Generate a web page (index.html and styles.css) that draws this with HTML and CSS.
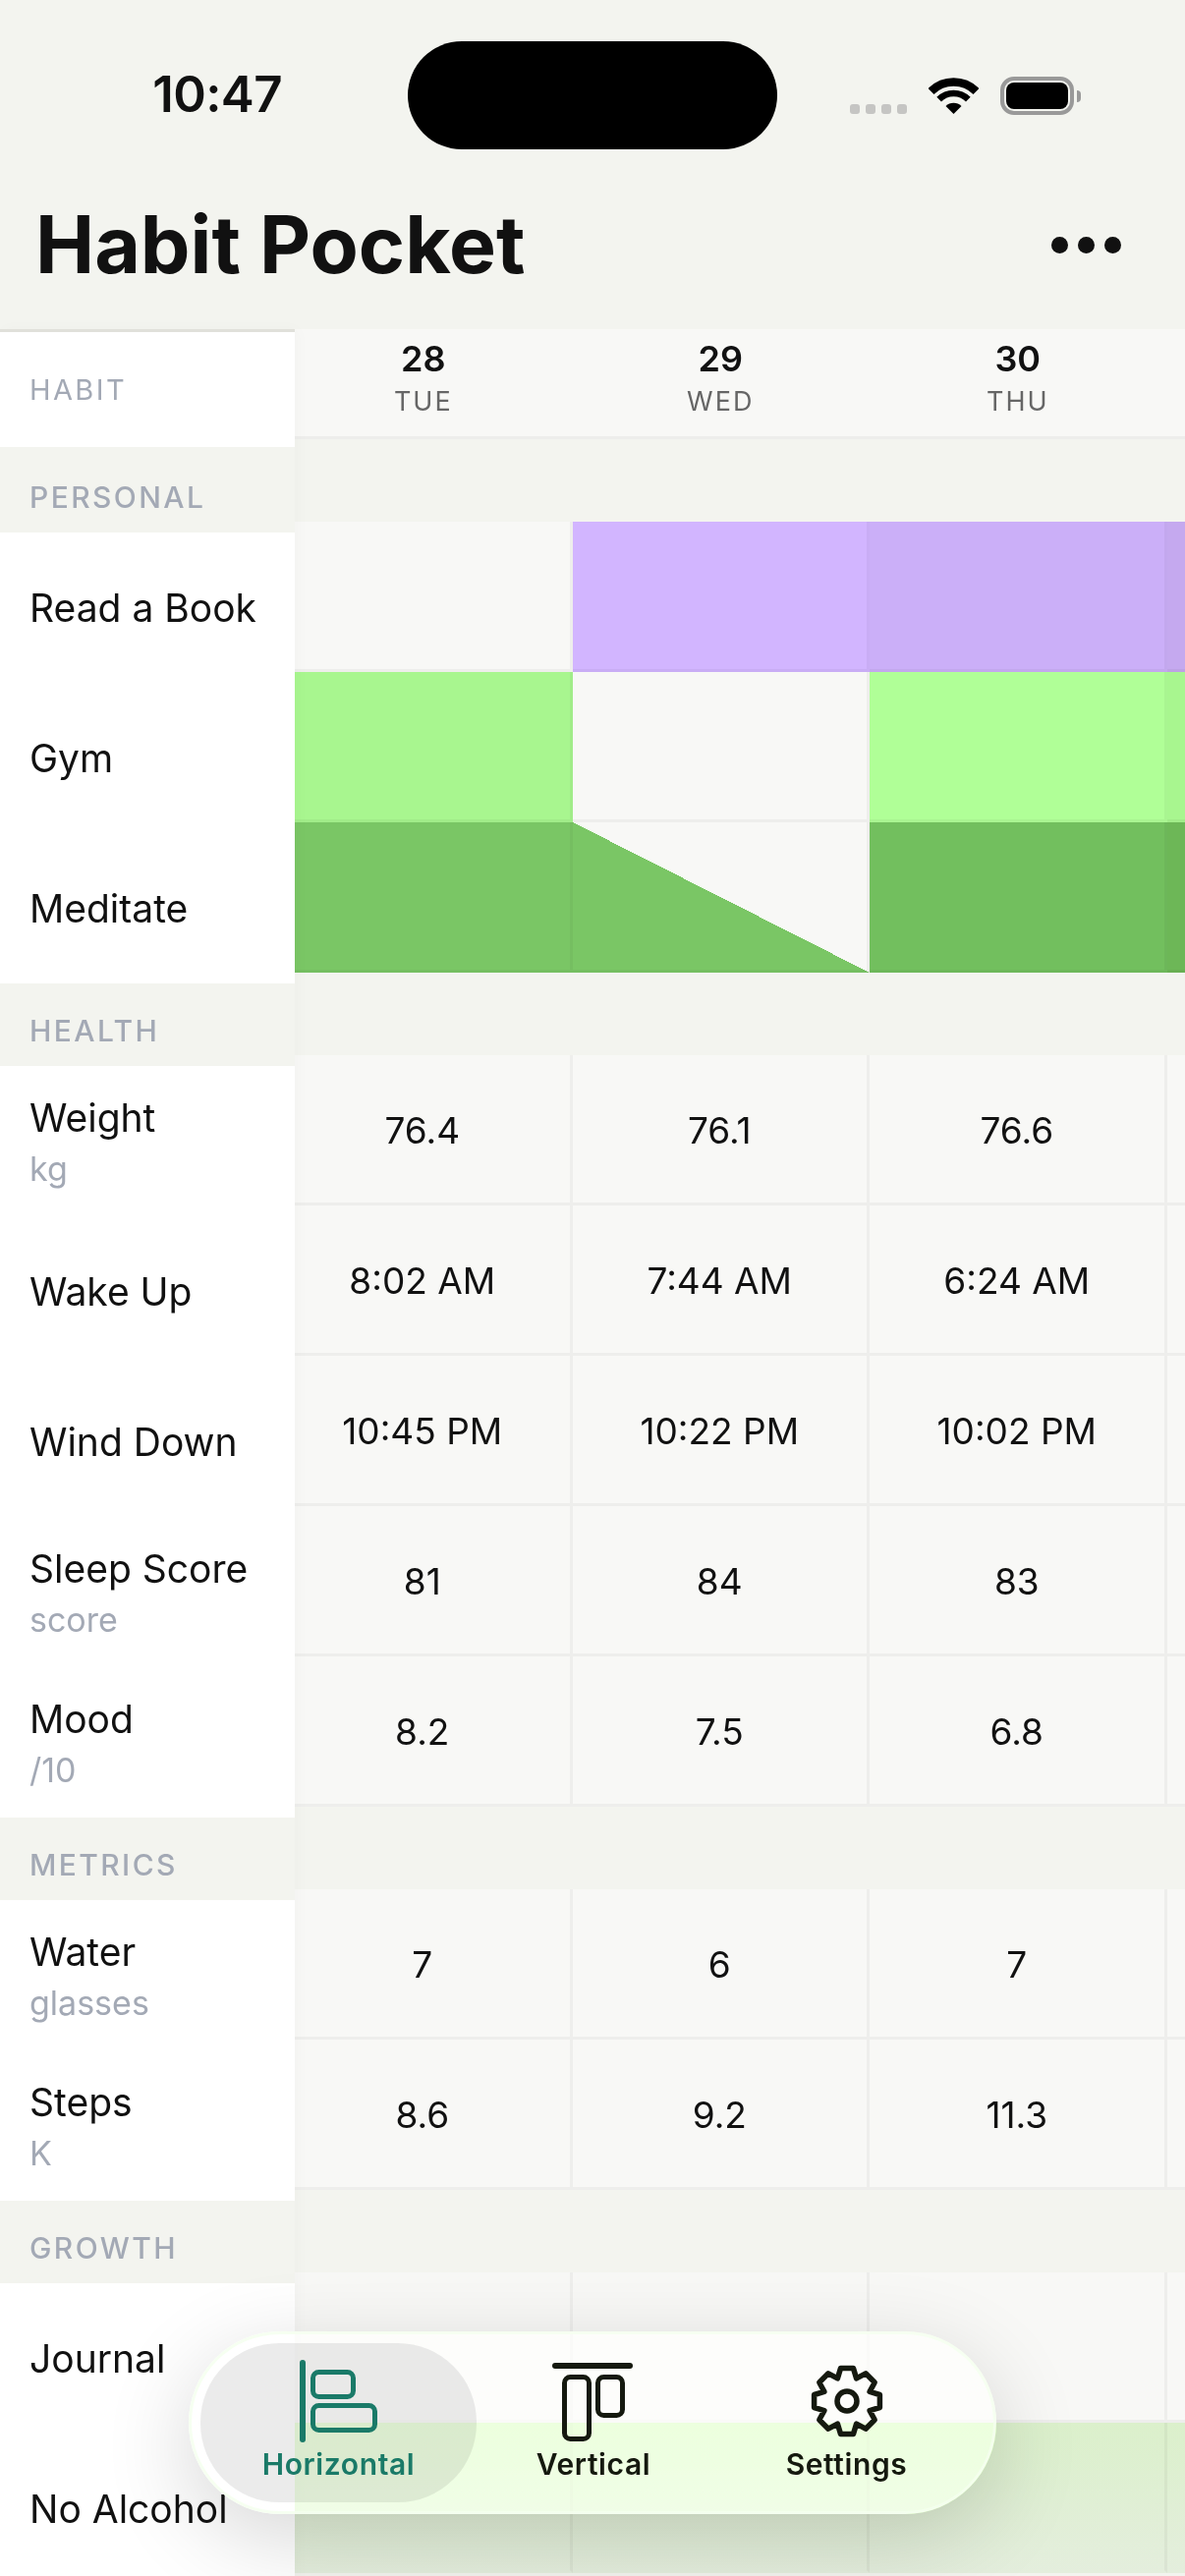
FILE: index.html
```html
<!DOCTYPE html>
<html>

<head>
    <title>Habit Pocket</title>
    <link rel="stylesheet" href="styles.css">
</head>

<body>
    <div class="status-bar">
        <span class="time">10:47</span>
        <div class="island"></div>
        <div class="status-icons">
            <div class="signal"><i></i><i></i><i></i><i></i></div>
            <svg class="wifi" width="51" height="38" viewBox="0 0 51 38">
                <path d="M2.5 14A32.5 32.5 0 0 1 48.5 14" fill="none" stroke="#000" stroke-width="8.4" />
                <path d="M10.65 22.15A21 21 0 0 1 40.35 22.15" fill="none" stroke="#000" stroke-width="6.6" />
                <path d="M25.5 37L17.5 29A11.3 11.3 0 0 1 33.5 29Z" fill="#000" />
            </svg>
            <div class="battery"><div class="battery-level"></div></div>
            <div class="battery-tip"></div>
        </div>
    </div>

    <header class="top-bar">
        <h1>Habit Pocket</h1>
        <div class="more"><i></i><i></i><i></i></div>
    </header>

    <main class="board">
        <!-- fixed column on the left -->
        <div class="names">
            <div class="names-head">HABIT</div>

            <div class="group-name">PERSONAL</div>
            <div class="name">Read a Book</div>
            <div class="name">Gym</div>
            <div class="name">Meditate</div>

            <div class="group-name">HEALTH</div>
            <div class="name">Weight<small>kg</small></div>
            <div class="name">Wake Up</div>
            <div class="name">Wind Down</div>
            <div class="name">Sleep Score<small>score</small></div>
            <div class="name">Mood<small>/10</small></div>

            <div class="group-name">METRICS</div>
            <div class="name">Water<small>glasses</small></div>
            <div class="name">Steps<small>K</small></div>

            <div class="group-name">GROWTH</div>
            <div class="name">Journal</div>
            <div class="name">No Alcohol</div>
        </div>

        <div class="days">
            <div class="track">
                <div class="day-row">
                    <div class="day"><b>28</b><span>TUE</span></div>
                    <div class="day"><b>29</b><span>WED</span></div>
                    <div class="day"><b>30</b><span>THU</span></div>
                    <div class="day"></div>
                </div>

                <div class="group-gap"></div>
                <div class="row">
                    <div class="cell"></div>
                    <div class="cell purple-1"></div>
                    <div class="cell purple-2"></div>
                    <div class="cell purple-3"></div>
                </div>
                <div class="row">
                    <div class="cell lime-1"></div>
                    <div class="cell"></div>
                    <div class="cell lime-2"></div>
                    <div class="cell lime-1"></div>
                </div>
                <div class="row">
                    <div class="cell green-1"></div>
                    <div class="cell green-half"></div>
                    <div class="cell green-2"></div>
                    <div class="cell green-3"></div>
                </div>

                <div class="group-gap"></div>
                <div class="row">
                    <div class="cell">76.4</div>
                    <div class="cell">76.1</div>
                    <div class="cell">76.6</div>
                    <div class="cell"></div>
                </div>
                <div class="row">
                    <div class="cell">8:02 AM</div>
                    <div class="cell">7:44 AM</div>
                    <div class="cell">6:24 AM</div>
                    <div class="cell"></div>
                </div>
                <div class="row">
                    <div class="cell">10:45 PM</div>
                    <div class="cell">10:22 PM</div>
                    <div class="cell">10:02 PM</div>
                    <div class="cell"></div>
                </div>
                <div class="row">
                    <div class="cell">81</div>
                    <div class="cell">84</div>
                    <div class="cell">83</div>
                    <div class="cell"></div>
                </div>
                <div class="row">
                    <div class="cell">8.2</div>
                    <div class="cell">7.5</div>
                    <div class="cell">6.8</div>
                    <div class="cell"></div>
                </div>

                <div class="group-gap"></div>
                <div class="row">
                    <div class="cell">7</div>
                    <div class="cell">6</div>
                    <div class="cell">7</div>
                    <div class="cell"></div>
                </div>
                <div class="row">
                    <div class="cell">8.6</div>
                    <div class="cell">9.2</div>
                    <div class="cell">11.3</div>
                    <div class="cell"></div>
                </div>

                <div class="group-gap"></div>
                <div class="row">
                    <div class="cell"></div>
                    <div class="cell"></div>
                    <div class="cell"></div>
                    <div class="cell"></div>
                </div>
                <div class="row">
                    <div class="cell pale"></div>
                    <div class="cell pale"></div>
                    <div class="cell pale"></div>
                    <div class="cell pale"></div>
                </div>
            </div>
        </div>
    </main>

    <nav class="tabs">
        <div class="tab active">
            <svg width="84" height="84" viewBox="0 0 84 84" fill="none" stroke="#1a7a68" stroke-width="5" stroke-linecap="round">
                <path d="M5 3V81" stroke-width="6" />
                <rect x="15.5" y="12.5" width="41" height="25" rx="6" />
                <rect x="15.5" y="46.5" width="63" height="25" rx="6" />
            </svg>
            <span>Horizontal</span>
        </div>
        <div class="tab">
            <svg width="84" height="84" viewBox="0 0 84 84" fill="none" stroke="#15190f" stroke-width="5" stroke-linecap="round">
                <path d="M3 6H79" stroke-width="6" />
                <rect x="12.5" y="17.5" width="25" height="63" rx="6" />
                <rect x="46.5" y="17.5" width="25" height="39" rx="6" />
            </svg>
            <span>Vertical</span>
        </div>
        <div class="tab">
            <svg width="84" height="84" viewBox="-42 -42 84 84" fill="none" stroke="#15190f" stroke-width="5.5" stroke-linejoin="round">
                <path d="M-9.6-23.1L-6.5-33.4L6.5-33.4L9.6-23.1L19-28.2L28.2-19L23.1-9.6L33.4-6.5L33.4 6.5L23.1 9.6L28.2 19L19 28.2L9.6 23.1L6.5 33.4L-6.5 33.4L-9.6 23.1L-19 28.2L-28.2 19L-23.1 9.6L-33.4 6.5L-33.4-6.5L-23.1-9.6L-28.2-19L-19-28.2Z" />
                <circle r="10" />
            </svg>
            <span>Settings</span>
        </div>
    </nav>
</body>

</html>
```

FILE: styles.css
```css
* {
    box-sizing: border-box;
}

html,
body {
    margin: 0px;
    height: 2622px;
    overflow: hidden;
}

body {
    position: relative;
    background-color: #f3f4ef;
    color: #111111;
    font-family: Inter, "Liberation Sans", sans-serif;
}

/* status bar */
.status-bar {
    height: 152px;
    padding-top: 42px;
    display: flex;
    align-items: flex-start;
}

.time {
    width: 415px;
    padding-top: 24px;
    padding-right: 128px;
    text-align: right;
    font-size: 51px;
    line-height: 60px;
    font-weight: 600;
    letter-spacing: -0.6px;
}

.island {
    width: 376px;
    height: 110px;
    border-radius: 55px;
    background-color: #000000;
}

.status-icons {
    display: flex;
    align-items: flex-end;
    margin-left: 74px;
    height: 75px;
}

.signal {
    display: flex;
    gap: 6px;
    margin-right: 22px;
    margin-bottom: 1px;
}

.signal i {
    width: 10px;
    height: 10px;
    border-radius: 3px;
    background-color: #c5c5c3;
}

.wifi {
    display: block;
    margin-right: 22px;
}

.battery {
    width: 75px;
    height: 39px;
    border: 4px solid #999999;
    border-radius: 14px;
    padding: 2px;
}

.battery-level {
    height: 100%;
    border-radius: 8px;
    background-color: #000000;
}

.battery-tip {
    width: 4px;
    height: 12px;
    margin-left: 3px;
    margin-bottom: 13px;
    border-radius: 0px 4px 4px 0px;
    background-color: #999999;
}

/* title */
.top-bar {
    height: 183px;
    padding: 9px 65px 0px 36px;
    display: flex;
    align-items: center;
    justify-content: space-between;
}

h1 {
    margin: 0px;
    font-size: 80.5px;
    font-weight: 700;
}

.more {
    display: flex;
    gap: 10px;
    padding-top: 3px;
}

.more i {
    width: 17px;
    height: 17px;
    border-radius: 50%;
    background-color: #111111;
}

/* board */
.board {
    display: flex;
    align-items: flex-start;
}

.names {
    position: relative;
    z-index: 1;
    flex: 0 0 300px;
    background-color: #ffffff;
    box-shadow: 3px 0px 14px rgba(0, 0, 0, 0.025);
}

.names-head {
    height: 120px;
    padding-left: 30px;
    display: flex;
    align-items: center;
    border-top: 3px solid #e0e0da;
    color: #a3a9b5;
    font-size: 29px;
    letter-spacing: 2.4px;
}

.group-name {
    height: 84px;
    padding: 0px 0px 18px 30px;
    display: flex;
    align-items: flex-end;
    background-color: #f3f4ef;
    color: #a3a9b5;
    font-size: 30px;
    font-weight: 500;
    letter-spacing: 2.4px;
}

.names-head + .group-name {
    height: 87px;
}

.name {
    height: 153px;
    padding-left: 30px;
    display: flex;
    flex-direction: column;
    justify-content: center;
    font-size: 39px;
    line-height: 48px;
}

.name small {
    margin-top: 8px;
    color: #a3a9b5;
    font-size: 34px;
    line-height: 40px;
}

.days {
    flex: 1;
    overflow: hidden;
}

.track {
    width: 1210px;
    margin-left: -20px;
}

.day-row,
.row {
    display: grid;
    grid-template-columns: repeat(4, 302.5px);
}

.day-row {
    height: 112px;
    background-color: #f8f8f6;
    border-bottom: 3px solid #ededeb;
}

.day {
    padding-right: 1px;
    padding-top: 8px;
    text-align: center;
}

.day b {
    display: block;
    font-size: 36px;
    line-height: 44px;
    font-weight: 600;
}

.day span {
    display: block;
    margin-top: 6px;
    color: #666666;
    font-size: 27px;
    line-height: 32px;
    letter-spacing: 2px;
}

.group-gap {
    height: 84px;
}

.cell {
    height: 153px;
    padding-top: 2px;
    display: flex;
    align-items: center;
    justify-content: center;
    background-color: #f8f8f6;
    background-origin: border-box;
    border-right: 3px solid rgba(0, 0, 0, 0.04);
    border-bottom: 3px solid rgba(0, 0, 0, 0.04);
    font-size: 37px;
}

.purple-1 {
    background-color: #d2b5ff;
}

.purple-2 {
    background-color: #cbaff8;
}

.purple-3 {
    background-color: #c5a9ef;
}

.lime-1 {
    background-color: #a8f68f;
}

.lime-2 {
    background-color: #b0ff97;
}

.green-1 {
    background-color: #7ac665;
}

.green-2 {
    background-color: #72bf5e;
}

.green-3 {
    background-color: #6db757;
}

.green-half {
    background-image: linear-gradient(to top right, #7ac665 50%, #f8f8f6 50%);
}

.pale {
    background-image: linear-gradient(#dbf0cb, #e4eedd);
    border-bottom-color: transparent;
}

/* floating tab bar */
.tabs {
    position: absolute;
    z-index: 2;
    left: 192px;
    top: 2373px;
    width: 822px;
    height: 186px;
    padding: 9px;
    display: grid;
    grid-template-columns: 281px 238px 277px;
    border: 3px solid rgba(244, 255, 238, 0.85);
    border-radius: 93px;
    background-color: rgba(255, 255, 255, 0.7);
    backdrop-filter: saturate(3);
    box-shadow: 0px 24px 90px rgba(0, 0, 0, 0.16);
}

.tab {
    display: flex;
    flex-direction: column;
    align-items: center;
    padding-top: 17px;
    border-radius: 80px;
    font-size: 30px;
    line-height: 36px;
    font-weight: 600;
    letter-spacing: 0.6px;
    color: #15190f;
}

.tab svg {
    display: block;
}

.tab span {
    margin-top: 4px;
}

.active {
    background-color: rgba(0, 0, 0, 0.08);
    color: #1a7a68;
}
```
